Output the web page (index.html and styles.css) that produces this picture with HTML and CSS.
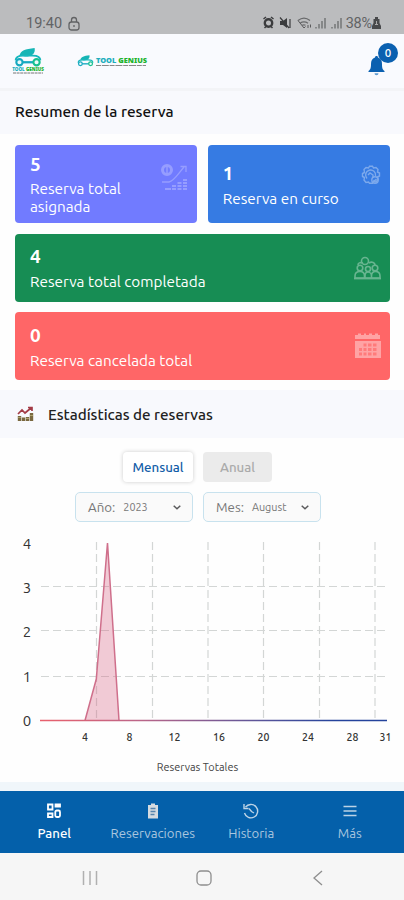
FILE: index.html
```html
<!DOCTYPE html>
<html lang="es">
<head>
    <meta charset="UTF-8">
    <meta name="viewport" content="width=device-width, initial-scale=1.0">
    <title>Tool Genius</title>
    <link rel="stylesheet" href="styles.css">
</head>
<body>
    <svg class="defs" width="0" height="0">
        <symbol id="car" viewBox="0 0 30 20">
            <path d="M6 8C7 3 12 1 22 0 23 6 19 9 12 9" fill="#16b5b5"/>
            <path d="M2 13C2 9 6 8 10 8H20C25 8 28 10 28 13" fill="none" stroke="#18b8bd" stroke-width="2"/>
            <path d="M9 15H21" stroke="#16a9c0" stroke-width="2.4"/>
            <circle cx="6" cy="15" r="3.3" fill="#eefafa" stroke="#16a9c0" stroke-width="2.2"/>
            <circle cx="24" cy="15" r="3.3" fill="#eefafa" stroke="#16c08f" stroke-width="2.2"/>
        </symbol>
    </svg>

    <div class="status-bar">
        <span class="time">19:40</span>
        <svg class="lock" width="12" height="15" viewBox="0 0 12 15" fill="none" stroke="#626365" stroke-width="1.3">
            <rect x="1" y="6" width="10" height="8" rx="2.5"/>
            <path d="M3.5 6V4a2.5 2.5 0 0 1 5 0v2M6 9v2"/>
        </svg>
        <div class="status-icons">
            <svg width="80" height="14" viewBox="0 0 80 14" fill="none" stroke="#3b3c3e">
                <circle cx="5.5" cy="7" r="3.7" stroke-width="2.4"/>
                <path d="M.5 3 3 1M10.5 3 8 1M1.5 12 3 10.5M9.5 12 8 10.5" stroke-width="1.5"/>
                <path d="M17 5h3l4-3v10l-4-3h-3z" fill="#3b3c3e" stroke="none"/>
                <path d="M17 1.5 26 12M27 3v9" stroke-width="1.2"/>
                <path d="M35 4.500c4-3.200 8-3.200 12 0M37 7.200c3-2 5-2 8 0M39 9.300q2-1 3.500 0" stroke="#68696b" stroke-width="1.2"/>
                <path d="M35 4.500 41 12 42.500 10.500M45 9v3M47.500 8.500v3" stroke="#59595b"/>
                <path d="M53 11v1.500M56 8v4.500M59 5v7.500M62 2v10.500M69 11v1.500M72 8v4.500M75 5v7.500M78 2v10.500" stroke="#747577" stroke-width="1.5"/>
            </svg>
            <span class="battery">38%</span>
            <svg width="9" height="12" viewBox="0 0 9 12">
                <path d="M3 0h3v2h1.500v4L9 9v3H0V9l1.500-3V2H3z" fill="#48494b"/>
                <path d="M4.500 4v4M3 7.500h3" stroke="#aaa"/>
            </svg>
        </div>
    </div>

    <header class="header">
        <div class="logo">
            <svg width="30" height="19"><use href="#car"/></svg>
            <b>TOOL <i>GENIUS</i></b>
            <svg width="30" height="2"><path d="M0 1h30" stroke="#777" stroke-dasharray="3 .6"/></svg>
        </div>
        <div class="logo wide">
            <svg width="17" height="12"><use href="#car"/></svg>
            <div>
                <b>TOOL <i>GENIUS</i></b>
                <svg width="50" height="3"><path d="M0 1.500h50" stroke="#888" stroke-width="1.2" stroke-dasharray="5 .8 7 .8"/></svg>
            </div>
        </div>
        <div class="bell">
            <svg width="17" height="20" viewBox="0 0 17 20" fill="#0b60b0">
                <path d="M8.500 0c1 0 1.500.6 1.500 1.500C13 2.300 14 5 14 8c0 4 .5 5.500 2.500 7v1H.5v-1C2.500 13.500 3 12 3 8c0-3 1-5.700 4-6.500C7 .6 7.500 0 8.500 0z"/>
                <path d="M6.500 17.200h4a2 2 0 0 1-4 0z" fill="#5f9bd0"/>
            </svg>
            <span class="badge">0</span>
        </div>
    </header>

    <h2 class="section-title first"><span>Resumen de la reserva</span></h2>

    <div class="cards">
        <div class="card purple">
            <div><strong>5</strong><p>Reserva total asignada</p></div>
            <svg width="28" height="29" viewBox="0 0 28 29" fill="none" stroke="#fff">
                <circle cx="7" cy="7" r="4.5" stroke-width="3"/>
                <path d="M7 4v6" stroke-width="1.5"/>
                <path d="M2 19h7c5-1 9-8 15-15M20.500 3.500H26V9" stroke-width="1.3"/>
                <path d="M5 26h6M12 23h4M12 26h4M17.500 20h4M17.500 23h4M17.500 26h4M23 17h4M23 20h4M23 23h4M23 26h4" stroke-width="2"/>
            </svg>
        </div>
        <div class="card blue">
            <div><strong>1</strong><p>Reserva en curso</p></div>
            <svg width="20" height="20" viewBox="0 0 20 20" fill="none" stroke="#fff" stroke-width="1.4">
                <path d="m7.500 3 1-1.800h3L12.500 3l2.500-.5 2 2-.5 2.500 2 1v3l-2 1 .5 2.500-2 2.500-2.500-.5-1 1.800h-3L7.500 17l-2.500.5-2-2.500.5-2.500-2-1v-3l2-1L3 4.500l2-2z"/>
                <path d="M6 13.500a5 5 0 1 1 8.500-2.500M7 10l2-2 3 2v3"/>
                <circle cx="14" cy="15" r="3.2"/>
                <path d="m12.500 15 1 1 2-2"/>
            </svg>
        </div>
        <div class="card green">
            <div><strong>4</strong><p>Reserva total completada</p></div>
            <svg width="27" height="24" viewBox="0 0 27 24" fill="none" stroke="#fff" stroke-width="1.6">
                <circle cx="11" cy="5" r="3.5"/><circle cx="6" cy="12" r="2.8"/><circle cx="14" cy="13" r="2.5"/><circle cx="21" cy="12" r="2.8"/>
                <path d="M1 22v-2c0-3 2-4.500 5-4.500s4.500 1.500 4.500 4.500v2zM11 22v-2c0-2 1-4 3-4s3.500 2 3.500 4v2zM17.500 22v-2c0-3 1-4.500 4-4.500S26 17 26 20v2zM4 9c0-2 2-3 5-2M15 7c3-2 6 0 6 2"/>
                <path d="M0 22.500h27" stroke-width="1.8"/>
            </svg>
        </div>
        <div class="card red">
            <div><strong>0</strong><p>Reserva cancelada total</p></div>
            <svg width="27" height="26" viewBox="0 0 27 26">
                <path d="M1 2h3V.5h3V2h3V.5h2V2h3V.5h3V2h3V.5h3V2h2v4H1z" fill="#fff"/>
                <path d="M1 8h26v17H1z" fill="#fff"/>
                <g stroke="#ff6566" stroke-width="2.8" stroke-opacity=".65"><path d="M9.500 12h3M14 12h3.500M19 12h3.500M5 16.500h3M9.500 16.500h3M14 16.500h3.500M19 16.500h3.500M5 21h3M9.500 21h3M14 21h3.500M19 21h3.500"/></g>
            </svg>
        </div>
    </div>

    <h2 class="section-title stats">
        <svg width="17" height="16" viewBox="0 0 17 16" fill="none">
            <path d="M1 8 5 4l3 3 6-5M11 1.500h4V5" stroke="#a33b46" stroke-width="1.7"/>
            <path d="M2.500 15v-5M6.500 15v-3.500M10.500 15v-4M14.500 15V7" stroke="#79683f" stroke-width="3.4"/>
            <path d="M1 11.500h3M9 12.500h3M13 9.500h3" stroke="#aaa06b"/>
        </svg>
        <span>Estadísticas de reservas</span>
    </h2>

    <div class="tabs">
        <button class="tab active">Mensual</button>
        <button class="tab">Anual</button>
    </div>
    <div class="filters">
        <div class="filter">
            <label>Año:</label><span>2023</span>
            <svg width="8" height="5" viewBox="0 0 8 5"><path d="m.7.700 3.300 3 3.300-3" fill="none" stroke="#59595b" stroke-width="1.5"/></svg>
        </div>
        <div class="filter">
            <label>Mes:</label><span>August</span>
            <svg width="8" height="5" viewBox="0 0 8 5"><path d="m.7.700 3.300 3 3.300-3" fill="none" stroke="#59595b" stroke-width="1.5"/></svg>
        </div>
    </div>

    <svg class="chart" width="404" height="260" viewBox="0 522 404 260">
        <defs>
            <linearGradient id="line" gradientUnits="userSpaceOnUse" x1="40" y1="0" x2="387" y2="0">
                <stop offset="0" stop-color="#e9606c"/>
                <stop offset=".28" stop-color="#bd6688"/>
                <stop offset=".65" stop-color="#56549a"/>
                <stop offset=".85" stop-color="#24439c"/>
                <stop offset="1" stop-color="#24439c"/>
            </linearGradient>
        </defs>
        <g class="grid">
            <path d="M41 586.500H387M41 630.500H387M41 676.500H387"/>
            <path d="M96.500 542V719M152.500 542V719M208 542V719M263.500 542V719M319.500 542V719M375 542V719"/>
        </g>
        <path d="M85 720.500 96.300 679 107.500 543 119 720.500z" fill="#d65c80" fill-opacity=".32"/>
        <path d="M85 720.500 96.300 679 107.500 543 119 720.500" fill="none" stroke="#cf6f8b" stroke-width="1.5"/>
        <path d="M40 719.700H387V721.300H40z" fill="url(#line)"/>
        <g class="y-labels">
            <text x="27" y="548.500">4</text>
            <text x="27" y="592.500">3</text>
            <text x="27" y="637">2</text>
            <text x="27" y="682">1</text>
            <text x="27" y="726">0</text>
        </g>
        <g class="x-labels">
            <text x="85" y="741">4</text>
            <text x="129.500" y="741">8</text>
            <text x="174.500" y="741">12</text>
            <text x="219" y="741">16</text>
            <text x="263.500" y="741">20</text>
            <text x="308" y="741">24</text>
            <text x="352.500" y="741">28</text>
            <text x="385.500" y="741">31</text>
        </g>
        <text class="caption" x="197.500" y="770.500">Reservas Totales</text>
    </svg>

    <nav class="nav">
        <a class="active">
            <svg width="16" height="16" viewBox="0 0 16 16" fill="none" stroke="#fff" stroke-width="1.8">
                <path d="M2 1.500h4.500v5H2zM9.500 1.500H14v2H9.500zM2 10.500h4.500v3.500H2z"/>
                <rect x="9.300" y="7.500" width="4.700" height="6.500" rx="1.500"/>
            </svg>
            Panel
        </a>
        <a>
            <svg width="16" height="16" viewBox="0 0 16 16">
                <path d="M3 2h3V.5h4V2h3v13.500H3z" fill="#d5dbe0"/>
                <path d="M5.500 5.500h5M5.500 8.500h5M5.500 11.500h4" stroke="#5684ad" stroke-width="1.3"/>
            </svg>
            Reservaciones
        </a>
        <a>
            <svg width="16" height="16" viewBox="0 0 16 16" fill="none" stroke="#bcd3e6" stroke-width="1.4">
                <path d="M2.500 4.200A6.700 6.700 0 1 1 1.500 10M1 1v4.500h4.500M6 5.500l2.500 3 2.500 1.500"/>
            </svg>
            Historia
        </a>
        <a>
            <svg width="16" height="16" viewBox="0 0 16 16"><path d="M1.500 3.500h13M1.500 8h13M1.500 12.500h13" stroke="#bcd3e6" stroke-width="1.4"/></svg>
            Más
        </a>
    </nav>

    <div class="system-bar">
        <svg width="18" height="18" viewBox="0 0 18 18"><path d="M2.500 2v14M9 2v14M15.500 2v14" stroke="#b0b0b0" stroke-width="1.5"/></svg>
        <svg width="18" height="18" viewBox="0 0 18 18"><rect x="2" y="2" width="14" height="14" rx="4" fill="none" stroke="#8e8e8e" stroke-width="1.3"/></svg>
        <svg width="18" height="18" viewBox="0 0 18 18"><path d="m13 2-8 7 8 7" fill="none" stroke="#8e8e8e" stroke-width="1.3"/></svg>
    </div>
</body>
</html>
```
FILE: styles.css
```css
* { box-sizing: border-box; }
body {
    margin: 0;
    width: 404px;
    height: 900px;
    overflow: hidden;
    display: flex;
    flex-direction: column;
    font-family: Ubuntu, "Noto Sans", sans-serif;
    background: #fefefe;
    color: #222;
}
body > * { flex-shrink: 0; }
svg { display: block; }
.defs { position: absolute; }
.status-bar {
    height: 34px;
    padding: 12px 23px 0 26px;
    display: flex;
    align-items: center;
    background: #bbbcbe;
    color: #626365;
    font: 14.5px Roboto, sans-serif;
}
.lock { margin-left: 6px; }
.status-icons {
    margin-left: auto;
    display: flex;
    align-items: center;
    gap: 3px;
}
.battery { letter-spacing: -0.2px; }
.battery + svg { margin-left: -3px; }
.header {
    height: 54px;
    padding: 0 12px;
    display: flex;
    align-items: center;
    background: #f9fafe;
}
.logo {
    width: 32px;
    display: flex;
    flex-direction: column;
    align-items: center;
    white-space: nowrap;
}
.logo b {
    font: 900 4.6px/5px "Noto Sans", sans-serif;
    color: #20aebd;
}
.logo i { font-style: normal; color: #20b32d; }
.logo.wide {
    width: 72px;
    margin-left: 33px;
    flex-direction: row;
    gap: 2px;
}
.wide b { display: block; font-size: 7.4px; line-height: 8px; }
.bell {
    position: relative;
    margin: 9px 7px 0 auto;
}
.badge {
    position: absolute;
    left: 10px;
    top: -13px;
    width: 20px;
    height: 20px;
    border-radius: 50%;
    background: #0b60b0;
    color: #fff;
    font-size: 11.5px;
    font-weight: 500;
    line-height: 20px;
    text-align: center;
}
.section-title {
    margin: 0;
    height: 48px;
    padding: 0 16px;
    display: flex;
    align-items: center;
    background: #f8f9fd;
    font-size: 15.4px;
    font-weight: 500;
}
.first { height: 46px; padding: 0 15px 2px; border-top: 3px solid #f3f4f7; color: #111; }
.stats { gap: 14px; padding-left: 17px; font-size: 15.2px; color: #222; }
.cards {
    padding: 11px 14px 10px 15px;
    display: grid;
    grid-template-columns: 1fr 1fr;
    grid-template-rows: 78px 68px 68px;
    gap: 10.5px;
}
.card {
    display: flex;
    align-items: center;
    justify-content: space-between;
    padding: 0 9px 0 15px;
    border-radius: 4px;
    color: #fff;
}
.card strong { display: block; font-size: 19px; line-height: 25px; }
.card p { margin: 0; font-size: 15.3px; line-height: 18px; padding-top: 4px; }
.card svg { opacity: 0.35; }
.purple { background: #717bff; }
.purple div { width: 110px; }
.purple p { padding-top: 3px; }
.purple svg { margin-top: -14px; opacity: 0.26; }
.blue { background: #367be3; }
.blue svg { margin-top: -18px; }
.green, .red { grid-column: 1 / 3; }
.green { background: #178d54; }
.red { background: #ff6667; }
.red svg { opacity: 0.4; }
.tabs {
    margin-top: 14px;
    padding-left: 123px;
    display: flex;
    gap: 10px;
}
.tab {
    width: 69px;
    height: 30px;
    padding: 0;
    border: 0;
    border-radius: 4px;
    background: #ebebeb;
    color: #aaa;
    font: 500 13.3px Ubuntu, "Noto Sans", sans-serif;
}
.tab.active {
    width: 70px;
    background: #fff;
    color: #125da8;
    box-shadow: 0 0 4px rgba(0, 0, 0, 0.2);
}
.filters {
    margin-top: 10px;
    padding-left: 75px;
    display: flex;
    gap: 10px;
}
.filter {
    width: 118px;
    height: 30px;
    padding: 0 11px 0 12px;
    display: flex;
    align-items: center;
    border: 1px solid #c8e2ee;
    border-radius: 5px;
    background: #fafafa;
    color: #777;
    font-size: 13.3px;
}
.filter span { margin-left: 8px; font-size: 10.8px; }
.filter svg { margin-left: auto; }
.chart { height: 260px; }
.grid path { stroke: #d3d6d5; stroke-width: 1.2; stroke-dasharray: 8 4; fill: none; }
.chart text { text-anchor: middle; fill: #333; }
.chart .y-labels text { font-size: 15px; }
.chart .x-labels text { font-size: 10.5px; font-weight: 500; }
.chart .caption { font-size: 10.9px; fill: #444; }
.nav {
    height: 71px;
    padding: 12px 5px 0;
    border-top: 9px solid #f0f6fa;
    display: grid;
    grid-template-columns: repeat(4, 1fr);
    background: #0460aa;
    color: #a9c6df;
    font-size: 13.2px;
}
.nav a {
    display: flex;
    flex-direction: column;
    align-items: center;
    gap: 5px;
    line-height: 18px;
}
.nav .active { color: #fff; font-weight: 500; }
.system-bar {
    height: 47px;
    padding: 3px 77px 0 81px;
    display: flex;
    align-items: center;
    justify-content: space-between;
    background: #f6f6f6;
}
```
